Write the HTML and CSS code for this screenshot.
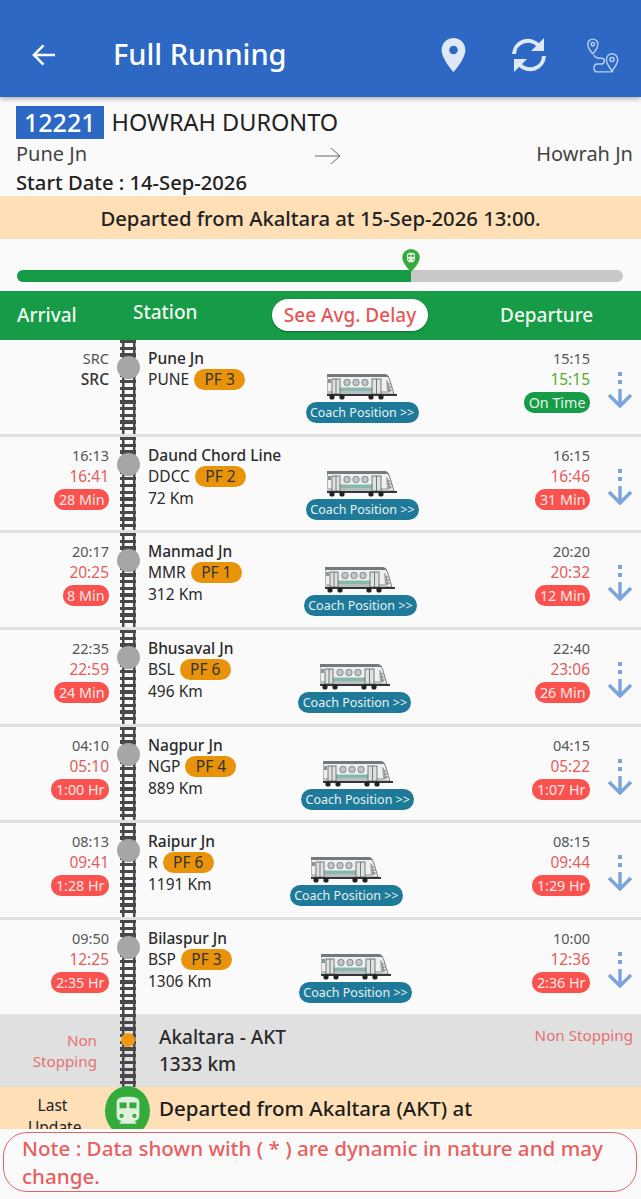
FILE: index.html
```html
<!DOCTYPE html>
<html lang="en">
<head>
  <meta charset="UTF-8" />
  <meta name="viewport" content="width=device-width, initial-scale=1.0"/>
  <title>Full Running</title>
  <link rel="stylesheet" href="styles.css">
</head>
<body>

  <svg class="defs" width="0" height="0">
    <symbol id="coach" viewBox="0 0 70 27">
      <path d="M0 2H58Q61 2 62.500 6L67 21H0z" fill="#eef0f0" stroke="#5b5f63" stroke-width=".8"/>
      <path d="M0 1H58Q60.500 1 62 4H0z" fill="#75797d"/>
      <rect x="0" y="18" width="62" height="3" fill="#b9bec0"/>
      <rect x="13" y="14.500" width="32" height="3.500" fill="#86b9ac"/>
      <rect x="1" y="6" width="3" height="4" fill="#8d9295"/>
      <rect x="5" y="6" width="8" height="15" fill="#dfe2e3" stroke="#5b5f63" stroke-width=".8"/>
      <path d="M9 6v15" stroke="#5b5f63" stroke-width=".8"/>
      <rect x="45" y="6" width="9" height="15" fill="#dfe2e3" stroke="#5b5f63" stroke-width=".8"/>
      <path d="M49.500 6v15" stroke="#5b5f63" stroke-width=".8"/>
      <rect x="17" y="6.500" width="6" height="6" rx="2.200" fill="#c3c7c9" stroke="#6b6f73" stroke-width=".8"/>
      <rect x="26" y="6.500" width="6" height="6" rx="2.200" fill="#c3c7c9" stroke="#6b6f73" stroke-width=".8"/>
      <rect x="35" y="6.500" width="6" height="6" rx="2.200" fill="#c3c7c9" stroke="#6b6f73" stroke-width=".8"/>
      <path d="M59 7l2 1 3 11h-4z" fill="#a5aaac"/>
      <path d="M60.500 11h3M61 14h3.500M61.500 17h3.500" stroke="#55595c" stroke-width=".7"/>
      <rect x="0" y="21" width="70" height="2" fill="#33363a"/>
      <circle cx="5" cy="24" r="2.600" fill="#222"/><circle cx="15" cy="24" r="2.600" fill="#222"/>
      <circle cx="44" cy="24" r="2.600" fill="#222"/><circle cx="54" cy="24" r="2.600" fill="#222"/>
    </symbol>
    <symbol id="down" viewBox="0 0 26 36">
      <rect x="11" y="0" width="4" height="4" fill="#7ba3de"/>
      <rect x="11" y="8" width="4" height="4" fill="#7ba3de"/>
      <path d="M13 17v17M2 23l11 11 11-11" fill="none" stroke="#7ba3de" stroke-width="3.400"/>
    </symbol>
    <symbol id="engine" viewBox="0 0 24 24">
      <path d="M12 2C8 2 4 2.500 4 6v9.500C4 17.430 5.570 19 7.500 19L6 20.500V21h12v-.5L16.500 19c1.930 0 3.500-1.570 3.500-3.500V6c0-3.500-3.580-4-8-4zM7.500 17a1.500 1.500 0 1 1 0-3 1.500 1.500 0 0 1 0 3zM11 10H6V6h5zm2 0V6h5v4zm3.500 7a1.500 1.500 0 1 1 0-3 1.500 1.500 0 0 1 0 3z" fill="#dff0dc"/>
    </symbol>
  </svg>

  <header class="appbar">
    <svg class="back" viewBox="0 0 26 24"><path d="M25 12H3M13 2L3 12l10 10" fill="none" stroke="#fff" stroke-width="2.600"/></svg>
    <h1>Full Running</h1>
    <svg class="pin" viewBox="5 2 14 20"><path d="M12 2C8.130 2 5 5.130 5 9c0 5.250 7 13 7 13s7-7.750 7-13c0-3.870-3.130-7-7-7zm0 9.500a2.500 2.500 0 1 1 0-5 2.500 2.500 0 0 1 0 5z" fill="#dfe8f7"/></svg>
    <svg class="sync" viewBox="0 0 36 36"><path d="M3 17A14 14 0 0 1 27 8M33 19A14 14 0 0 1 9 28" fill="none" stroke="#dfe8f7" stroke-width="4"/><path d="M33 1v13H20zM3 35V22h13z" fill="#dfe8f7"/></svg>
    <svg class="route" viewBox="0 0 28 31" fill="none" stroke="#b9cdec" stroke-width="1.300"><path d="M5 1a4.500 4.500 0 0 0-4.500 4.500C.5 9 5 14 5 14s4.500-5 4.500-8.500A4.500 4.500 0 0 0 5 1z"/><circle cx="5" cy="5.500" r="1.500"/><path d="M22 14a5 5 0 0 0-5 5c0 4 5 10 5 10s5-6 5-10a5 5 0 0 0-5-5z"/><circle cx="22" cy="19" r="1.800"/><path d="M6 15c1 3 4 3 7 3 3 .2 3 5-.5 5H9c-4 0-4 7 0 7h13l1-1"/></svg>
  </header>

  <section class="train-info">
    <div class="train-title"><span class="train-no">12221</span> HOWRAH DURONTO</div>
    <div class="route-row">
      <span>Pune Jn</span>
      <svg class="route-arrow" viewBox="0 0 26 18"><path d="M0 9h25M16 1l9 8-9 8" fill="none" stroke="#666" stroke-width="1"/></svg>
      <span>Howrah Jn</span>
    </div>
    <div class="start-date">Start Date : 14-Sep-2026</div>
  </section>

  <div class="status-banner">Departed from Akaltara at 15-Sep-2026 13:00.</div>

  <div class="progress-wrap">
    <div class="progress">
      <div class="progress-fill" style="width: 65%">
        <svg class="progress-pin" viewBox="0 0 16 21">
          <path d="M8 0a8 8 0 0 0-8 8c0 5 8 13 8 13s8-8 8-13a8 8 0 0 0-8-8z" fill="#35ab3c"/>
          <use href="#engine" x="2.500" y="2.500" width="11" height="11"/>
        </svg>
      </div>
    </div>
  </div>

  <div class="table-head">
    <span class="th-arrival">Arrival</span>
    <span class="th-station">Station</span>
    <span class="delay-btn">See Avg. Delay</span>
    <span class="th-departure">Departure</span>
  </div>

  <main class="list">
    <div class="row">
      <div class="arr"><div class="sch">SRC</div><div class="act src">SRC</div></div>
      <div class="track"><span class="dot"></span></div>
      <div class="station">
        <div class="name">Pune Jn</div>
        <div class="code">PUNE <span class="pf">PF 3</span></div>
      </div>
      <div class="coach"><svg class="coach-img"><use href="#coach"/></svg><span class="coach-btn">Coach Position &gt;&gt;</span></div>
      <div class="dep"><div class="sch">15:15</div><div class="act ok">15:15</div><span class="tag green">On Time</span></div>
      <svg class="down"><use href="#down"/></svg>
    </div>

    <div class="row">
      <div class="arr"><div class="sch">16:13</div><div class="act">16:41</div><span class="tag">28 Min</span></div>
      <div class="track"><span class="dot"></span></div>
      <div class="station">
        <div class="name">Daund Chord Line</div>
        <div class="code">DDCC <span class="pf">PF 2</span></div>
        <div class="km">72 Km</div>
      </div>
      <div class="coach"><svg class="coach-img"><use href="#coach"/></svg><span class="coach-btn">Coach Position &gt;&gt;</span></div>
      <div class="dep"><div class="sch">16:15</div><div class="act">16:46</div><span class="tag">31 Min</span></div>
      <svg class="down"><use href="#down"/></svg>
    </div>

    <div class="row">
      <div class="arr"><div class="sch">20:17</div><div class="act">20:25</div><span class="tag">8 Min</span></div>
      <div class="track"><span class="dot"></span></div>
      <div class="station">
        <div class="name">Manmad Jn</div>
        <div class="code">MMR <span class="pf">PF 1</span></div>
        <div class="km">312 Km</div>
      </div>
      <div class="coach"><svg class="coach-img"><use href="#coach"/></svg><span class="coach-btn">Coach Position &gt;&gt;</span></div>
      <div class="dep"><div class="sch">20:20</div><div class="act">20:32</div><span class="tag">12 Min</span></div>
      <svg class="down"><use href="#down"/></svg>
    </div>

    <div class="row">
      <div class="arr"><div class="sch">22:35</div><div class="act">22:59</div><span class="tag">24 Min</span></div>
      <div class="track"><span class="dot"></span></div>
      <div class="station">
        <div class="name">Bhusaval Jn</div>
        <div class="code">BSL <span class="pf">PF 6</span></div>
        <div class="km">496 Km</div>
      </div>
      <div class="coach"><svg class="coach-img"><use href="#coach"/></svg><span class="coach-btn">Coach Position &gt;&gt;</span></div>
      <div class="dep"><div class="sch">22:40</div><div class="act">23:06</div><span class="tag">26 Min</span></div>
      <svg class="down"><use href="#down"/></svg>
    </div>

    <div class="row">
      <div class="arr"><div class="sch">04:10</div><div class="act">05:10</div><span class="tag">1:00 Hr</span></div>
      <div class="track"><span class="dot"></span></div>
      <div class="station">
        <div class="name">Nagpur Jn</div>
        <div class="code">NGP <span class="pf">PF 4</span></div>
        <div class="km">889 Km</div>
      </div>
      <div class="coach"><svg class="coach-img"><use href="#coach"/></svg><span class="coach-btn">Coach Position &gt;&gt;</span></div>
      <div class="dep"><div class="sch">04:15</div><div class="act">05:22</div><span class="tag">1:07 Hr</span></div>
      <svg class="down"><use href="#down"/></svg>
    </div>

    <div class="row">
      <div class="arr"><div class="sch">08:13</div><div class="act">09:41</div><span class="tag">1:28 Hr</span></div>
      <div class="track"><span class="dot"></span></div>
      <div class="station">
        <div class="name">Raipur Jn</div>
        <div class="code">R <span class="pf">PF 6</span></div>
        <div class="km">1191 Km</div>
      </div>
      <div class="coach"><svg class="coach-img"><use href="#coach"/></svg><span class="coach-btn">Coach Position &gt;&gt;</span></div>
      <div class="dep"><div class="sch">08:15</div><div class="act">09:44</div><span class="tag">1:29 Hr</span></div>
      <svg class="down"><use href="#down"/></svg>
    </div>

    <div class="row last">
      <div class="arr"><div class="sch">09:50</div><div class="act">12:25</div><span class="tag">2:35 Hr</span></div>
      <div class="track"><span class="dot"></span></div>
      <div class="station">
        <div class="name">Bilaspur Jn</div>
        <div class="code">BSP <span class="pf">PF 3</span></div>
        <div class="km">1306 Km</div>
      </div>
      <div class="coach"><svg class="coach-img"><use href="#coach"/></svg><span class="coach-btn">Coach Position &gt;&gt;</span></div>
      <div class="dep"><div class="sch">10:00</div><div class="act">12:36</div><span class="tag">2:36 Hr</span></div>
      <svg class="down"><use href="#down"/></svg>
    </div>

    <div class="non-stop">
      <div class="ns-left">Non Stopping</div>
      <div class="track"><span class="dot small"></span></div>
      <div class="ns-station">Akaltara - AKT<br>1333 km</div>
      <div class="ns-right">Non Stopping</div>
    </div>

    <div class="last-update">
      <div class="lu-label">Last Update</div>
      <div class="lu-icon"><svg class="lu-engine"><use href="#engine"/></svg></div>
      <div class="lu-text">Departed from Akaltara (AKT) at</div>
    </div>
  </main>

  <div class="note">Note : Data shown with ( * ) are dynamic in nature and may change.</div>

</body>
</html>
```

FILE: styles.css
```css
* {
  box-sizing: border-box;
}
html, body {
  height: 100%;
}
body {
  margin: 0;
  height: 1199px;
  overflow: hidden;
  display: flex;
  flex-direction: column;
  background: #fafafa;
  font-family: "Noto Sans", "Open Sans", sans-serif;
  color: #222;
}
.defs {
  position: absolute;
}

/* top bar */
.appbar {
  height: 97px;
  flex: none;
  background: #2d68c4;
  box-shadow: 0 2px 5px rgba(0, 0, 0, .3);
  position: relative;
  display: flex;
  align-items: center;
  padding: 13px 0 0 31px;
}
.appbar h1 {
  margin: -3px 0 0 57px;
  width: 328px;
  font-size: 29px;
  font-weight: 500;
  color: #fff;
}
.back {
  width: 25px;
  height: 24px;
}
.pin {
  width: 25px;
  height: 34px;
}
.sync {
  width: 36px;
  height: 36px;
  margin-left: 45px;
}
.route {
  width: 32px;
  height: 35px;
  margin-left: 40px;
}

/* train info */
.train-info {
  padding: 9px 8px 0 16px;
  height: 99px;
  flex: none;
}
.train-title {
  display: flex;
  align-items: center;
  gap: 8px;
  font-size: 23.500px;
  line-height: 33px;
}
.train-no {
  background: #2d68c4;
  color: #fff;
  padding: 0 8px;
  font-size: 25px;
  font-weight: 500;
}
.route-row {
  display: flex;
  justify-content: space-between;
  align-items: center;
  font-size: 20px;
  line-height: 30px;
  color: #444;
}
.route-arrow {
  width: 26px;
  height: 18px;
  margin-left: 33px;
  margin-top: 3px;
}
.start-date {
  font-size: 20.200px;
  font-weight: 500;
  line-height: 27px;
}

.status-banner {
  height: 43px;
  flex: none;
  background: #ffdfb5;
  display: flex;
  align-items: center;
  justify-content: center;
  font-size: 20.300px;
  font-weight: 500;
}

/* progress */
.progress-wrap {
  height: 52px;
  flex: none;
  padding: 31px 18px 0 17px;
}
.progress {
  height: 12px;
  border-radius: 6px;
  background: #c8c8c8;
}
.progress-fill {
  height: 100%;
  background: #169c47;
  border-radius: 6px 0 0 6px;
  position: relative;
}
.progress-pin {
  position: absolute;
  right: -9px;
  top: -21px;
  width: 18px;
  height: 23px;
}

/* table head */
.table-head {
  height: 49px;
  flex: none;
  background: #169c47;
  display: flex;
  align-items: center;
  color: #f2f8f2;
  font-size: 19px;
  font-weight: 500;
  padding: 0 0 2px 17px;
}
.th-arrival {
  width: 116px;
}
.th-station {
  width: 139px;
  margin-top: -6px;
}
.delay-btn {
  width: 156px;
  height: 32px;
  border-radius: 16px;
  background: #fff;
  color: #e85555;
  display: flex;
  align-items: center;
  justify-content: center;
  box-shadow: 0 1px 2px rgba(0, 0, 0, .3);
}
.th-departure {
  margin-left: 72px;
}

/* rows */
.list {
  flex: 1;
  min-height: 0;
  overflow: hidden;
}
.row {
  height: 96.700px;
  display: flex;
  border-bottom: 3px solid #e0e0e0;
}
.row.last {
  height: 93.800px;
  border-bottom: 0;
}
.arr {
  width: 109px;
  text-align: right;
  padding-top: 8px;
}
.sch {
  font-size: 14.500px;
  line-height: 21px;
  color: #555;
}
.act {
  font-size: 15.500px;
  line-height: 21px;
  color: #e35d5d;
}
.act.src {
  color: #333;
  font-weight: 500;
}
.act.ok {
  color: #4fae26;
}
.tag {
  display: inline-block;
  margin-top: 2px;
  padding: 0 4.500px;
  height: 21px;
  line-height: 21px;
  border-radius: 10px;
  background: #f9524f;
  color: #fde9e8;
  font-size: 14.300px;
}
.tag.green {
  background: #169c47;
  color: #e4f5e8;
}
.track {
  width: 38px;
  flex: none;
  display: flex;
  justify-content: center;
  background:
    linear-gradient(#46484c, #46484c) 13px 0 / 2.500px 100% no-repeat,
    linear-gradient(#46484c, #46484c) 24px 0 / 2.500px 100% no-repeat,
    repeating-linear-gradient(#46484c 0 3.300px, transparent 3.300px 6.700px) 11px 0 / 16px 100% no-repeat;
}
.dot {
  width: 23px;
  height: 23px;
  border-radius: 50%;
  background: #a6a6a6;
  margin-top: 16px;
}
.dot.small {
  width: 14px;
  height: 14px;
  margin-top: 19px;
  background: #ef9812;
}
.station {
  flex: none;
  padding: 8px 0 0 1px;
  font-size: 15.500px;
  line-height: 21px;
  color: #2b2b2b;
}
.name {
  width: 0;
  white-space: nowrap;
  font-weight: 500;
}
.code {
  white-space: nowrap;
}
.pf {
  display: inline-block;
  width: 51px;
  height: 21px;
  margin-left: 1px;
  border-radius: 11px;
  background: #e9930b;
  color: #333;
  text-align: center;
  font-size: 15.500px;
}
.km {
  margin-top: 1px;
}
.coach {
  flex: 1;
  display: flex;
  flex-direction: column;
  align-items: center;
  padding-top: 33px;
}
.coach-img {
  width: 70px;
  height: 27px;
}
.coach-btn {
  margin-top: 2px;
  width: 113px;
  height: 21px;
  line-height: 21px;
  border-radius: 11px;
  background: #1f7a99;
  color: #e6f2f5;
  font-size: 12.500px;
  text-align: center;
  white-space: nowrap;
}
.dep {
  width: 111px;
  text-align: right;
  padding-top: 8px;
}
.down {
  width: 26px;
  height: 36px;
  margin: 32px 8px 0 17px;
}

/* non stopping station */
.non-stop {
  height: 73px;
  background: #e0e0e0;
  display: flex;
  color: #e57373;
  font-size: 15.200px;
}
.ns-left {
  width: 109px;
  padding: 16px 12px 0 0;
  text-align: right;
  line-height: 21px;
}
.ns-station {
  margin-left: 12px;
  padding-top: 10px;
  font-size: 19px;
  line-height: 27px;
  font-weight: 500;
  color: #2b2b2b;
}
.ns-right {
  margin-left: auto;
  padding: 11px 8px 0 0;
}

/* last update, cut off by the note */
.last-update {
  display: flex;
  height: 100px;
  background: #ffdfb5;
  position: relative;
}
.lu-label {
  width: 105px;
  padding: 7px 28px 0 28px;
  text-align: center;
  font-size: 15.500px;
  line-height: 22px;
}
.lu-icon {
  width: 45px;
  height: 50px;
  border-radius: 50%;
  background: #35ab3c;
  margin-top: -1px;
  display: flex;
  align-items: center;
  justify-content: center;
}
.lu-engine {
  width: 34px;
  height: 34px;
}
.lu-text {
  margin-left: 9px;
  padding-top: 7px;
  font-size: 20.500px;
  font-weight: 500;
  color: #1c1c1c;
}

.note {
  flex: none;
  margin: 3px 4px 7px 3px;
  height: 60px;
  border: 1.500px solid #e06666;
  border-radius: 24px;
  padding: 1px 10px 0 18px;
  font-size: 20.600px;
  font-weight: 500;
  line-height: 28px;
  color: #e85f5f;
  background: #fafafa;
}
```
